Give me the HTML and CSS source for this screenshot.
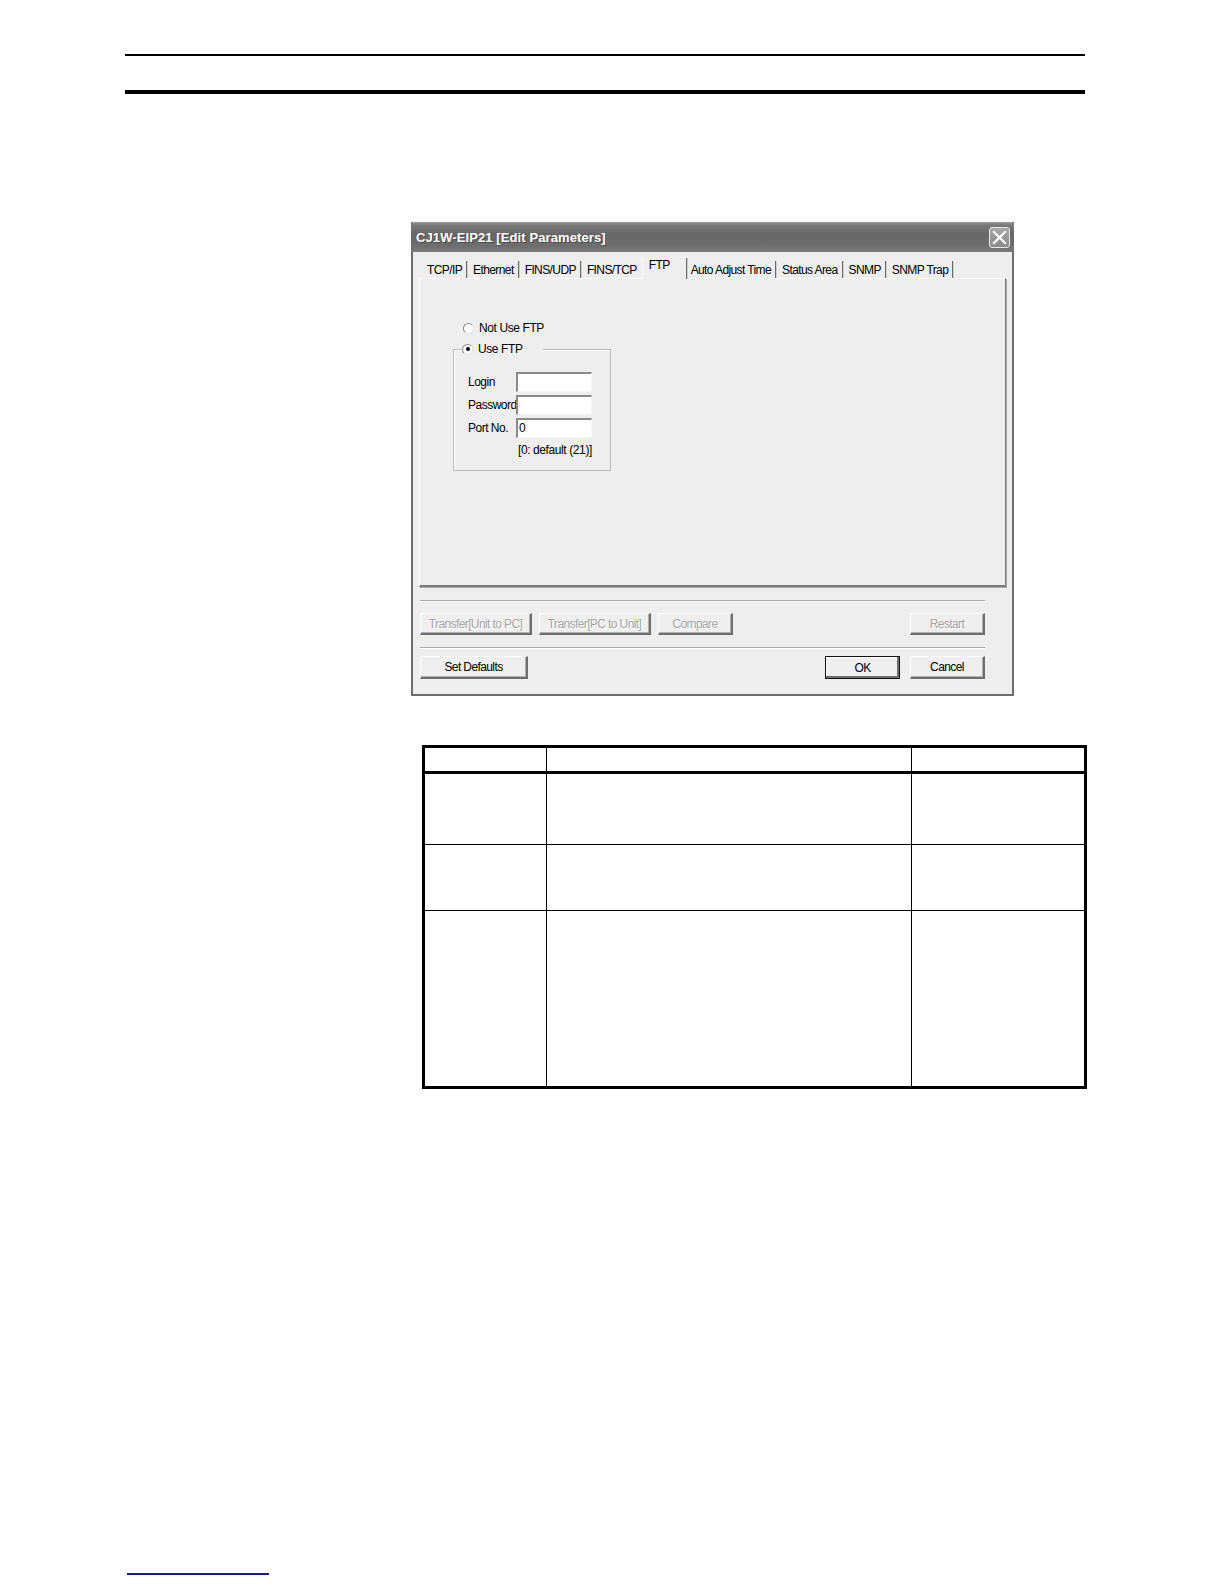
FILE: index.html
```html
<!DOCTYPE html>
<html lang="en">
<head>
<meta charset="utf-8">
<title>CJ1W-EIP21 Edit Parameters - FTP</title>
<link rel="stylesheet" href="styles.css">
</head>
<body>
<div class="page">
  <div class="rule-thin"></div>
  <div class="rule-thick"></div>

  <div class="dialog">
    <div class="titlebar">
      <span class="title">CJ1W-EIP21 [Edit Parameters]</span>
      <span class="close">
        <svg width="15" height="15" viewBox="0 0 15 15"><path d="M2 2 L13 13 M13 2 L2 13" stroke="#ffffff" stroke-width="2.2" stroke-linecap="square"/></svg>
      </span>
    </div>
    <div class="dialog-body">
      <div class="tabs">
        <span class="tab tab-first">TCP/IP</span>
        <span class="tab">Ethernet</span>
        <span class="tab">FINS/UDP</span>
        <span class="tab tab-prev">FINS/TCP</span>
        <span class="tab tab-active">FTP</span>
        <span class="tab tab-next">Auto Adjust Time</span>
        <span class="tab">Status Area</span>
        <span class="tab">SNMP</span>
        <span class="tab">SNMP Trap</span>
      </div>
      <div class="panel">
        <label class="radio-row">
          <span class="radio"></span>
          <span>Not Use FTP</span>
        </label>
        <fieldset class="group">
          <legend class="radio-row legend">
            <span class="radio radio-on"><span class="dot"></span></span>
            <span>Use FTP</span>
          </legend>
          <div class="fields">
            <span class="lbl">Login</span><span class="input"></span>
            <span class="lbl">Password</span><span class="input"></span>
            <span class="lbl">Port No.</span><span class="input">0</span>
          </div>
          <div class="hint">[0: default (21)]</div>
        </fieldset>
      </div>
      <div class="lower">
        <div class="sep"></div>
        <div class="btnrow">
          <span class="btn btn-disabled btn-transfer">Transfer[Unit to PC]</span>
          <span class="btn btn-disabled btn-transfer">Transfer[PC to Unit]</span>
          <span class="btn btn-disabled btn-small">Compare</span>
          <span class="spacer"></span>
          <span class="btn btn-disabled btn-small">Restart</span>
        </div>
        <div class="sep sep2"></div>
        <div class="btnrow btnrow2">
          <span class="btn btn-defaults">Set Defaults</span>
          <span class="spacer"></span>
          <span class="btn btn-small btn-default">OK</span>
          <span class="btn btn-small">Cancel</span>
        </div>
      </div>
    </div>
  </div>

  <table class="grid">
    <colgroup>
      <col class="c1"><col class="c2"><col class="c3">
    </colgroup>
    <thead>
      <tr class="hrow"><th></th><th></th><th></th></tr>
    </thead>
    <tbody>
      <tr class="r1"><td></td><td></td><td></td></tr>
      <tr class="r2"><td></td><td></td><td></td></tr>
      <tr class="r3"><td></td><td></td><td></td></tr>
    </tbody>
  </table>

  <div class="footer-link"></div>
</div>
</body>
</html>
```

FILE: styles.css
```css
html, body {
  margin: 0;
  padding: 0;
  background: #ffffff;
}

html {
  overflow: hidden;
}

body {
  font-family: "Liberation Sans", Arial, sans-serif;
  font-size: 12px;
  color: #000;
}

.page {
  width: 960px;
  margin-left: 125px;
  padding-top: 54px;
}

.rule-thin {
  height: 2px;
  background: #000;
}

.rule-thick {
  height: 4px;
  margin-top: 34px;
  background: #000;
}

/* ---------- dialog ---------- */
.dialog {
  width: 603px;
  height: 474px;
  margin-top: 128px;
  margin-left: 286px;
  box-sizing: border-box;
  border: 2px solid #6e6e6e;
  border-top: none;
  background: #eeeeee;
  display: flex;
  flex-direction: column;
}

.titlebar {
  height: 30px;
  flex: none;
  margin: 0 -2px;
  padding: 0 4px 0 5px;
  border-radius: 4px 4px 0 0;
  background: linear-gradient(#9a9a9a 0, #7a7a7a 3px, #666666 12px, #6e6e6e 24px, #7a7a7a 30px);
  display: flex;
  align-items: center;
  justify-content: space-between;
}

.title {
  color: #ffffff;
  font-weight: bold;
  font-size: 13px;
  letter-spacing: 0.1px;
  text-shadow: 1px 1px 0 #4a4a4a;
}

.close {
  width: 19px;
  height: 19px;
  border: 1px solid #e8e8e8;
  border-radius: 3px;
  background: linear-gradient(#a8a8a8, #8a8a8a);
  display: flex;
  align-items: center;
  justify-content: center;
  margin-top: 1px;
}

.dialog-body {
  padding: 6px 5px 0 6px;
  display: flex;
  flex-direction: column;
}

/* tabs */
.tabs {
  display: flex;
  align-items: flex-end;
  height: 20px;
  letter-spacing: -0.6px;
}

.tab {
  height: 17px;
  box-sizing: border-box;
  padding: 2px 4px 0 6px;
  line-height: 14px;
  border-right: 1px solid #6a6a6a;
  box-shadow: 1px 0 0 #d0d0d0;
  white-space: nowrap;
}

.tab-first {
  padding-left: 8px;
}

.tab-prev {
  border-right: none;
  box-shadow: none;
  padding-right: 0;
}

.tab-active {
  height: 21px;
  margin-bottom: -1px;
  margin-left: 5px;
  padding: 0 16px 0 6px;
  line-height: 14px;
  background: #eeeeee;
  border-left: 1px solid #ffffff;
  position: relative;
  z-index: 1;
}

.tab-next {
  padding-left: 4px;
}

.panel {
  width: 587px;
  height: 309px;
  box-sizing: border-box;
  border-top: 1px solid #ffffff;
  border-left: 1px solid #ffffff;
  border-right: 1px solid #7a7a7a;
  border-bottom: 2px solid #7a7a7a;
  box-shadow: 1px 1px 0 #a8a8a8;
  padding: 42px 0 0 33px;
  display: flex;
  flex-direction: column;
  align-items: flex-start;
}

.radio-row {
  display: flex;
  align-items: center;
  gap: 5px;
  height: 14px;
  padding-left: 10px;
  letter-spacing: -0.4px;
}

.radio {
  width: 11px;
  height: 11px;
  box-sizing: border-box;
  border-radius: 50%;
  background: #ffffff;
  border: 1px solid #8a8a8a;
  border-right-color: #e0e0e0;
  border-bottom-color: #e0e0e0;
  display: flex;
  align-items: center;
  justify-content: center;
}

.radio-on .dot {
  width: 4px;
  height: 4px;
  border-radius: 50%;
  background: #000;
}

.group {
  margin: 7px 0 0 0;
  padding: 0 0 13px 0;
  width: 158px;
  box-sizing: border-box;
  border: 1px solid #bdbdbd;
  box-shadow: inset 1px 1px 0 #ffffff;
  min-inline-size: 0;
}

.legend {
  margin-left: 7px;
  padding: 0 20px 0 2px;
  background: #eeeeee;
}

.group .legend {
  padding-left: 1px;
}

.fields {
  display: grid;
  grid-template-columns: 48px 76px;
  row-gap: 3px;
  padding: 16px 0 0 14px;
  align-items: center;
  letter-spacing: -0.5px;
}

.lbl {
  line-height: 14px;
  margin-top: -1px;
}

.input {
  height: 20px;
  box-sizing: border-box;
  background: #ffffff;
  border-top: 2px solid #8a8a8a;
  border-left: 2px solid #8a8a8a;
  border-right: 1px solid #f4f4f4;
  border-bottom: 1px solid #f4f4f4;
  padding-left: 1px;
  line-height: 17px;
}

.hint {
  margin: 5px 0 0 64px;
  line-height: 14px;
  letter-spacing: -0.4px;
}

/* lower buttons */
.lower {
  width: 565px;
  margin-left: 1px;
  display: flex;
  flex-direction: column;
}

.sep {
  height: 1px;
  margin-top: 13px;
  background: #a8a8a8;
  border-bottom: 1px solid #ffffff;
}

.sep2 {
  margin-top: 12px;
}

.btnrow {
  display: flex;
  gap: 7px;
  margin-top: 11px;
  letter-spacing: -0.6px;
}

.btnrow2 {
  margin-top: 7px;
  gap: 10px;
}

.spacer {
  flex: 1;
}

.btn {
  height: 22px;
  box-sizing: border-box;
  display: flex;
  align-items: center;
  justify-content: center;
  background: #efefef;
  border-top: 1px solid #ffffff;
  border-left: 1px solid #ffffff;
  border-right: 2px solid #6e6e6e;
  border-bottom: 2px solid #6e6e6e;
  box-shadow: inset -1px -1px 0 #b0b0b0;
}

.btn-disabled {
  color: #a6a6a6;
  text-shadow: 1px 1px 0 #ffffff;
}

.btn-transfer {
  width: 112px;
}

.btn-small {
  width: 75px;
}

.btn-defaults {
  width: 108px;
  height: 23px;
}

.btnrow2 .btn {
  height: 23px;
}

.btn-default {
  border: 1px solid #111111;
  box-shadow: inset -2px -2px 0 #6e6e6e, inset 1px 1px 0 #ffffff;
}

/* ---------- table ---------- */
.grid {
  margin-top: 49px;
  margin-left: 297px;
  width: 662px;
  border-collapse: collapse;
  border: 3px solid #000;
  table-layout: fixed;
}

.c1 { width: 123px; }
.c2 { width: 365px; }
.c3 { width: 174px; }

.grid th,
.grid td {
  border: 1px solid #000;
  padding: 0;
}

.grid thead th {
  border-bottom: 3px solid #000;
}

.hrow { height: 26px; }
.r1 { height: 72px; }
.r2 { height: 66px; }
.r3 { height: 177px; }

.footer-link {
  width: 142px;
  height: 2px;
  margin-top: 484px;
  margin-left: 2px;
  background: #1a1a8c;
}
```
